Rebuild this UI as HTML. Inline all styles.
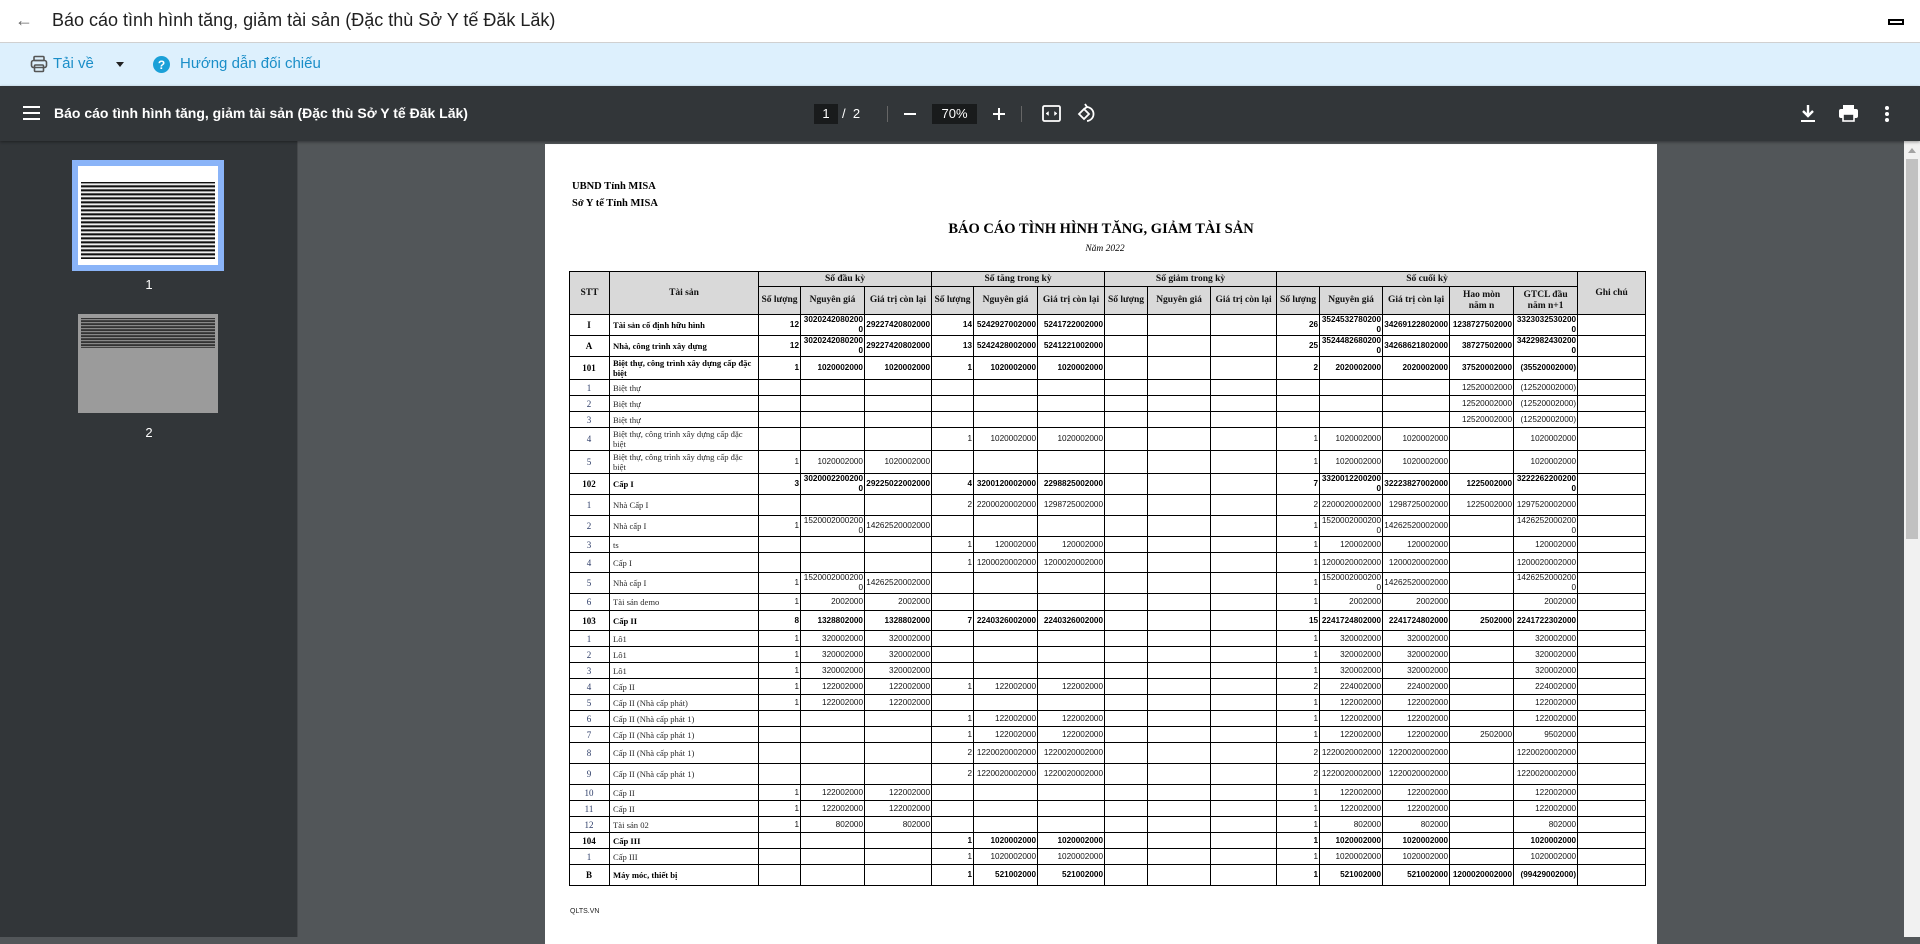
<!DOCTYPE html>
<html><head><meta charset="utf-8">
<style>
*{box-sizing:border-box;margin:0;padding:0}
body{width:1920px;height:937px;overflow:hidden;background:#525659;font-family:"Liberation Sans",sans-serif;position:relative}
#top{position:absolute;left:0;top:0;width:1920px;height:43px;background:#fff;border-bottom:1px solid #d0d0d0}
#top .t{position:absolute;left:52px;top:10px;font-size:18px;color:#212121}
#top .back{position:absolute;left:15px;top:10px;font-size:18px;color:#666}
#blue{position:absolute;left:0;top:43px;width:1920px;height:43px;background:#ddf0fd}
#blue span{position:absolute;top:12px;font-size:15px;color:#1a8ec8}
#tb{position:absolute;left:0;top:86px;width:1920px;height:55px;background:#323639;box-shadow:0 1px 3px rgba(0,0,0,.4);z-index:2}
#tb .tt{position:absolute;left:54px;top:19px;color:#fff;font-size:14px;font-weight:bold}
#side{position:absolute;left:0;top:141px;width:298px;height:796px;background:#323639;border-right:1px solid #45484b}
#page{position:absolute;left:545px;top:144px;width:1112px;height:800px;background:#fff}
#sb{position:absolute;left:1904px;top:141px;width:16px;height:796px;background:#f1f1f1}
.serif{font-family:"Liberation Serif",serif}
table{position:absolute;left:24px;top:127px;width:1076px;border-collapse:collapse;table-layout:fixed;font-family:"Liberation Sans",sans-serif;font-size:8.2px;color:#111}
td,th{border:1px solid #000;padding:0 1px 0 0;vertical-align:middle;overflow:hidden;word-break:break-all;line-height:10px}
th{background:#d9d9d9;font-family:"Liberation Serif",serif;font-size:9.5px;font-weight:bold;text-align:center;line-height:11px;word-break:normal;padding:0 1px}
td{text-align:right}
td.s{text-align:center;font-family:"Liberation Serif",serif;font-size:9px;color:#2a3a66;word-break:normal}
td.n{text-align:left;font-family:"Liberation Serif",serif;font-size:8.6px;color:#2a2a2a;padding-left:3px;word-break:normal}
tr.b td{font-weight:bold;color:#000}
tr.b td.s,tr.b td.n{color:#000}
</style></head><body>
<div id="top"><span class="back">&#8592;</span><span class="t">Báo cáo tình hình tăng, giảm tài sản (Đặc thù Sở Y tế Đăk Lăk)</span>
<div style="position:absolute;left:1888px;top:19px;width:16px;height:6px;border:2px solid #000"></div></div>
<div id="blue">
<svg style="position:absolute;left:30px;top:12px" width="18" height="18" viewBox="0 0 18 18" fill="none" stroke="#555" stroke-width="1.6"><rect x="4" y="1.5" width="10" height="4" rx="1"/><rect x="1.5" y="5.5" width="15" height="7" rx="2"/><rect x="4.5" y="10" width="9" height="6.5" rx="1"/></svg>
<span style="left:53px">Tải về</span>
<svg style="position:absolute;left:116px;top:19px" width="8" height="5"><path d="M0 0H8L4 5Z" fill="#222"/></svg>
<svg style="position:absolute;left:153px;top:13px" width="17" height="17" viewBox="0 0 17 17"><circle cx="8.5" cy="8.5" r="8.5" fill="#1aa0d8"/><text x="8.5" y="13" font-size="12" font-weight="bold" fill="#fff" text-anchor="middle" font-family="Liberation Sans">?</text></svg>
<span style="left:180px">Hướng dẫn đối chiếu</span>
</div>
<div id="tb">
<svg style="position:absolute;left:23px;top:20px" width="17" height="14"><path d="M0 1H17M0 7H17M0 13H17" stroke="#fff" stroke-width="2"/></svg>
<span class="tt">Báo cáo tình hình tăng, giảm tài sản (Đặc thù Sở Y tế Đăk Lăk)</span>
<div style="position:absolute;left:814px;top:18px;width:24px;height:20px;background:#191b1c;color:#fff;font-size:13px;text-align:center;line-height:20px">1</div>
<span style="position:absolute;left:842px;top:20px;color:#fff;font-size:13px">/&nbsp; 2</span>
<div style="position:absolute;left:887px;top:20px;width:1px;height:16px;background:#666"></div>
<div style="position:absolute;left:904px;top:27px;width:12px;height:2px;background:#fff"></div>
<div style="position:absolute;left:932px;top:18px;width:45px;height:20px;background:#191b1c;color:#fff;font-size:13px;text-align:center;line-height:20px">70%</div>
<div style="position:absolute;left:993px;top:27px;width:12px;height:2px;background:#fff"></div>
<div style="position:absolute;left:998px;top:22px;width:2px;height:12px;background:#fff"></div>
<div style="position:absolute;left:1021px;top:20px;width:1px;height:16px;background:#666"></div>
<svg style="position:absolute;left:1042px;top:19px" width="19" height="17" viewBox="0 0 19 17" fill="none" stroke="#fff" stroke-width="1.8"><rect x="1" y="1" width="17" height="15" rx="1.5"/><path d="M4 8.5L6.5 6.5V10.5ZM15 8.5L12.5 6.5V10.5Z" fill="#fff" stroke-width="0.5"/></svg>
<svg style="position:absolute;left:1077px;top:17px" width="21" height="21" viewBox="0 0 21 21" fill="none" stroke="#fff" stroke-width="1.8"><path d="M2 11L7 6L12 11L7 16Z"/><path d="M9 4A7 7 0 1 1 10 18"/><path d="M8 1L10 4L7 6" /></svg>
<svg style="position:absolute;left:1800px;top:19px" width="16" height="18"><path d="M8 0V10M3 6L8 11L13 6" stroke="#fff" stroke-width="2.4" fill="none"/><path d="M1 16H15" stroke="#fff" stroke-width="2"/></svg>
<svg style="position:absolute;left:1839px;top:19px" width="19" height="17"><rect x="4" y="0" width="11" height="4" fill="#fff"/><rect x="0" y="4" width="19" height="9" rx="2" fill="#fff"/><rect x="4" y="9" width="11" height="7" fill="#323639" stroke="#fff" stroke-width="1.6"/></svg>
<svg style="position:absolute;left:1884px;top:20px" width="6" height="16"><circle cx="3" cy="2" r="2" fill="#fff"/><circle cx="3" cy="8" r="2" fill="#fff"/><circle cx="3" cy="14" r="2" fill="#fff"/></svg>
</div>
<div id="side">
<div style="position:absolute;left:72px;top:19px;width:152px;height:111px;background:#8ab4f8"></div>
<div style="position:absolute;left:78px;top:25px;width:140px;height:99px;background:#fff">
<div style="position:absolute;left:3px;top:16px;width:134px;height:77px;background:repeating-linear-gradient(#111 0 1px,#999 1px 2px,#eee 2px 3px,#555 3px 4px)"></div></div>
<div style="position:absolute;left:0;top:136px;width:298px;text-align:center;color:#fff;font-size:13px">1</div>
<div style="position:absolute;left:78px;top:173px;width:140px;height:99px;background:#9b9b9b">
<div style="position:absolute;left:3px;top:4px;width:134px;height:30px;background:repeating-linear-gradient(#333 0 1px,#888 1px 2px,#444 2px 3px)"></div></div>
<div style="position:absolute;left:0;top:284px;width:298px;text-align:center;color:#fff;font-size:13px">2</div>
</div>
<div id="sb"><svg style="position:absolute;left:4px;top:7px" width="8" height="5"><path d="M0 5L4 0L8 5Z" fill="#a3a3a3"/></svg>
<div style="position:absolute;left:2px;top:18px;width:12px;height:380px;background:#c1c1c1"></div></div>
<div id="page">
<div class="serif" style="position:absolute;left:27px;top:34px;font-size:10.5px;font-weight:bold;line-height:17px">UBND Tỉnh MISA<br>Sở Y tế Tỉnh MISA</div>
<div class="serif" style="position:absolute;left:0;width:1112px;top:77px;text-align:center;font-size:14.5px;font-weight:bold">BÁO CÁO TÌNH HÌNH TĂNG, GIẢM TÀI SẢN</div>
<div class="serif" style="position:absolute;left:0;width:1120px;top:100px;text-align:center;font-size:9.5px;font-style:italic">Năm 2022</div>
<table>
<colgroup><col style="width:40px"><col style="width:149px"><col style="width:42px"><col style="width:64px"><col style="width:67px"><col style="width:42px"><col style="width:64px"><col style="width:67px"><col style="width:43px"><col style="width:63px"><col style="width:66px"><col style="width:43px"><col style="width:63px"><col style="width:67px"><col style="width:64px"><col style="width:64px"><col style="width:68px"></colgroup>
<tr style="height:15px"><th rowspan="2">STT</th><th rowspan="2">Tài sản</th><th colspan="3">Số đầu kỳ</th><th colspan="3">Số tăng trong kỳ</th><th colspan="3">Số giảm trong kỳ</th><th colspan="5">Số cuối kỳ</th><th rowspan="2">Ghi chú</th></tr>
<tr style="height:28px"><th>Số lượng</th><th>Nguyên giá</th><th>Giá trị còn lại</th><th>Số lượng</th><th>Nguyên giá</th><th>Giá trị còn lại</th><th>Số lượng</th><th>Nguyên giá</th><th>Giá trị còn lại</th><th>Số lượng</th><th>Nguyên giá</th><th>Giá trị còn lại</th><th>Hao mòn<br>năm n</th><th>GTCL đầu năm n+1</th></tr>
<tr class="b" style="height:21px"><td class="s">I</td><td class="n">Tài sản cố định hữu hình</td><td>12</td><td>30202420802000</td><td>29227420802000</td><td>14</td><td>5242927002000</td><td>5241722002000</td><td></td><td></td><td></td><td>26</td><td>35245327802000</td><td>34269122802000</td><td>1238727502000</td><td>33230325302000</td><td></td></tr>
<tr class="b" style="height:21px"><td class="s">A</td><td class="n">Nhà, công trình xây dựng</td><td>12</td><td>30202420802000</td><td>29227420802000</td><td>13</td><td>5242428002000</td><td>5241221002000</td><td></td><td></td><td></td><td>25</td><td>35244826802000</td><td>34268621802000</td><td>38727502000</td><td>34229824302000</td><td></td></tr>
<tr class="b" style="height:23px"><td class="s">101</td><td class="n">Biệt thự, công trình xây dựng cấp đặc biệt</td><td>1</td><td>1020002000</td><td>1020002000</td><td>1</td><td>1020002000</td><td>1020002000</td><td></td><td></td><td></td><td>2</td><td>2020002000</td><td>2020002000</td><td>37520002000</td><td>(35520002000)</td><td></td></tr>
<tr style="height:16px"><td class="s">1</td><td class="n">Biệt thự</td><td></td><td></td><td></td><td></td><td></td><td></td><td></td><td></td><td></td><td></td><td></td><td></td><td>12520002000</td><td>(12520002000)</td><td></td></tr>
<tr style="height:16px"><td class="s">2</td><td class="n">Biệt thự</td><td></td><td></td><td></td><td></td><td></td><td></td><td></td><td></td><td></td><td></td><td></td><td></td><td>12520002000</td><td>(12520002000)</td><td></td></tr>
<tr style="height:16px"><td class="s">3</td><td class="n">Biệt thự</td><td></td><td></td><td></td><td></td><td></td><td></td><td></td><td></td><td></td><td></td><td></td><td></td><td>12520002000</td><td>(12520002000)</td><td></td></tr>
<tr style="height:23px"><td class="s">4</td><td class="n">Biệt thự, công trình xây dựng cấp đặc biệt</td><td></td><td></td><td></td><td>1</td><td>1020002000</td><td>1020002000</td><td></td><td></td><td></td><td>1</td><td>1020002000</td><td>1020002000</td><td></td><td>1020002000</td><td></td></tr>
<tr style="height:23px"><td class="s">5</td><td class="n">Biệt thự, công trình xây dựng cấp đặc biệt</td><td>1</td><td>1020002000</td><td>1020002000</td><td></td><td></td><td></td><td></td><td></td><td></td><td>1</td><td>1020002000</td><td>1020002000</td><td></td><td>1020002000</td><td></td></tr>
<tr class="b" style="height:21px"><td class="s">102</td><td class="n">Cấp I</td><td>3</td><td>30200022002000</td><td>29225022002000</td><td>4</td><td>3200120002000</td><td>2298825002000</td><td></td><td></td><td></td><td>7</td><td>33200122002000</td><td>32223827002000</td><td>1225002000</td><td>32222622002000</td><td></td></tr>
<tr style="height:21px"><td class="s">1</td><td class="n">Nhà Cấp I</td><td></td><td></td><td></td><td>2</td><td>2200020002000</td><td>1298725002000</td><td></td><td></td><td></td><td>2</td><td>2200020002000</td><td>1298725002000</td><td>1225002000</td><td>1297520002000</td><td></td></tr>
<tr style="height:21px"><td class="s">2</td><td class="n">Nhà cấp I</td><td>1</td><td>15200020002000</td><td>14262520002000</td><td></td><td></td><td></td><td></td><td></td><td></td><td>1</td><td>15200020002000</td><td>14262520002000</td><td></td><td>14262520002000</td><td></td></tr>
<tr style="height:16px"><td class="s">3</td><td class="n">ts</td><td></td><td></td><td></td><td>1</td><td>120002000</td><td>120002000</td><td></td><td></td><td></td><td>1</td><td>120002000</td><td>120002000</td><td></td><td>120002000</td><td></td></tr>
<tr style="height:20px"><td class="s">4</td><td class="n">Cấp I</td><td></td><td></td><td></td><td>1</td><td>1200020002000</td><td>1200020002000</td><td></td><td></td><td></td><td>1</td><td>1200020002000</td><td>1200020002000</td><td></td><td>1200020002000</td><td></td></tr>
<tr style="height:21px"><td class="s">5</td><td class="n">Nhà cấp I</td><td>1</td><td>15200020002000</td><td>14262520002000</td><td></td><td></td><td></td><td></td><td></td><td></td><td>1</td><td>15200020002000</td><td>14262520002000</td><td></td><td>14262520002000</td><td></td></tr>
<tr style="height:17px"><td class="s">6</td><td class="n">Tài sản demo</td><td>1</td><td>2002000</td><td>2002000</td><td></td><td></td><td></td><td></td><td></td><td></td><td>1</td><td>2002000</td><td>2002000</td><td></td><td>2002000</td><td></td></tr>
<tr class="b" style="height:20px"><td class="s">103</td><td class="n">Cấp II</td><td>8</td><td>1328802000</td><td>1328802000</td><td>7</td><td>2240326002000</td><td>2240326002000</td><td></td><td></td><td></td><td>15</td><td>2241724802000</td><td>2241724802000</td><td>2502000</td><td>2241722302000</td><td></td></tr>
<tr style="height:16px"><td class="s">1</td><td class="n">Lô1</td><td>1</td><td>320002000</td><td>320002000</td><td></td><td></td><td></td><td></td><td></td><td></td><td>1</td><td>320002000</td><td>320002000</td><td></td><td>320002000</td><td></td></tr>
<tr style="height:16px"><td class="s">2</td><td class="n">Lô1</td><td>1</td><td>320002000</td><td>320002000</td><td></td><td></td><td></td><td></td><td></td><td></td><td>1</td><td>320002000</td><td>320002000</td><td></td><td>320002000</td><td></td></tr>
<tr style="height:16px"><td class="s">3</td><td class="n">Lô1</td><td>1</td><td>320002000</td><td>320002000</td><td></td><td></td><td></td><td></td><td></td><td></td><td>1</td><td>320002000</td><td>320002000</td><td></td><td>320002000</td><td></td></tr>
<tr style="height:16px"><td class="s">4</td><td class="n">Cấp II</td><td>1</td><td>122002000</td><td>122002000</td><td>1</td><td>122002000</td><td>122002000</td><td></td><td></td><td></td><td>2</td><td>224002000</td><td>224002000</td><td></td><td>224002000</td><td></td></tr>
<tr style="height:16px"><td class="s">5</td><td class="n">Cấp II (Nhà cấp phát)</td><td>1</td><td>122002000</td><td>122002000</td><td></td><td></td><td></td><td></td><td></td><td></td><td>1</td><td>122002000</td><td>122002000</td><td></td><td>122002000</td><td></td></tr>
<tr style="height:16px"><td class="s">6</td><td class="n">Cấp II (Nhà cấp phát 1)</td><td></td><td></td><td></td><td>1</td><td>122002000</td><td>122002000</td><td></td><td></td><td></td><td>1</td><td>122002000</td><td>122002000</td><td></td><td>122002000</td><td></td></tr>
<tr style="height:16px"><td class="s">7</td><td class="n">Cấp II (Nhà cấp phát 1)</td><td></td><td></td><td></td><td>1</td><td>122002000</td><td>122002000</td><td></td><td></td><td></td><td>1</td><td>122002000</td><td>122002000</td><td>2502000</td><td>9502000</td><td></td></tr>
<tr style="height:21px"><td class="s">8</td><td class="n">Cấp II (Nhà cấp phát 1)</td><td></td><td></td><td></td><td>2</td><td>1220020002000</td><td>1220020002000</td><td></td><td></td><td></td><td>2</td><td>1220020002000</td><td>1220020002000</td><td></td><td>1220020002000</td><td></td></tr>
<tr style="height:21px"><td class="s">9</td><td class="n">Cấp II (Nhà cấp phát 1)</td><td></td><td></td><td></td><td>2</td><td>1220020002000</td><td>1220020002000</td><td></td><td></td><td></td><td>2</td><td>1220020002000</td><td>1220020002000</td><td></td><td>1220020002000</td><td></td></tr>
<tr style="height:16px"><td class="s">10</td><td class="n">Cấp II</td><td>1</td><td>122002000</td><td>122002000</td><td></td><td></td><td></td><td></td><td></td><td></td><td>1</td><td>122002000</td><td>122002000</td><td></td><td>122002000</td><td></td></tr>
<tr style="height:16px"><td class="s">11</td><td class="n">Cấp II</td><td>1</td><td>122002000</td><td>122002000</td><td></td><td></td><td></td><td></td><td></td><td></td><td>1</td><td>122002000</td><td>122002000</td><td></td><td>122002000</td><td></td></tr>
<tr style="height:16px"><td class="s">12</td><td class="n">Tài sản 02</td><td>1</td><td>802000</td><td>802000</td><td></td><td></td><td></td><td></td><td></td><td></td><td>1</td><td>802000</td><td>802000</td><td></td><td>802000</td><td></td></tr>
<tr class="b" style="height:16px"><td class="s">104</td><td class="n">Cấp III</td><td></td><td></td><td></td><td>1</td><td>1020002000</td><td>1020002000</td><td></td><td></td><td></td><td>1</td><td>1020002000</td><td>1020002000</td><td></td><td>1020002000</td><td></td></tr>
<tr style="height:16px"><td class="s">1</td><td class="n">Cấp III</td><td></td><td></td><td></td><td>1</td><td>1020002000</td><td>1020002000</td><td></td><td></td><td></td><td>1</td><td>1020002000</td><td>1020002000</td><td></td><td>1020002000</td><td></td></tr>
<tr class="b" style="height:21px"><td class="s">B</td><td class="n">Máy móc, thiết bị</td><td></td><td></td><td></td><td>1</td><td>521002000</td><td>521002000</td><td></td><td></td><td></td><td>1</td><td>521002000</td><td>521002000</td><td>1200020002000</td><td>(99429002000)</td><td></td></tr>
</table>
<div style="position:absolute;left:25px;top:764px;font-size:7px;color:#222">QLTS.VN</div>
</div>
</body></html>
